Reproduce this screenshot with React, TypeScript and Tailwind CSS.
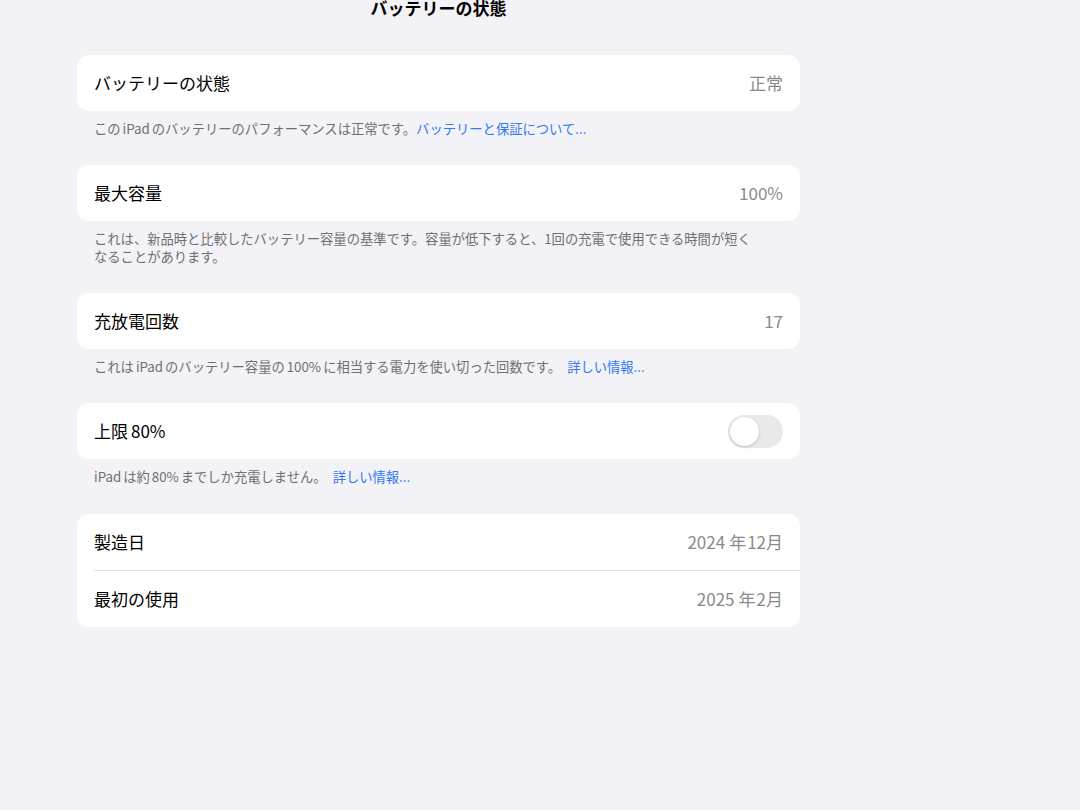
import { ReactNode } from 'react'

const font = { fontFamily: '"Noto Sans CJK JP", "Noto Sans", sans-serif' }

function Row({ label, value, children }: { label: ReactNode; value?: ReactNode; children?: ReactNode }) {
  return (
    <div className="flex items-center justify-between h-[56px] px-[17px]">
      <span className="text-[17px] text-black">{label}</span>
      {value && <span className="text-[17px] text-[#8a8a8e]">{value}</span>}
      {children}
    </div>
  )
}

function Footer({ children }: { children: ReactNode }) {
  return (
    <div className="px-[17px] pt-[9px] pb-[27px] text-[13.3px] leading-[18px] text-[#6f6f74] whitespace-nowrap">
      {children}
    </div>
  )
}

// iOS puts a little air around latin words in Japanese text
function L({ children }: { children: ReactNode }) {
  return <span className="mx-[2px]">{children}</span>
}

function Link({ children }: { children: ReactNode }) {
  return <span className="ml-[3px] text-[#3478f6]">{children}</span>
}

function Toggle() {
  return (
    <div className="w-[55px] h-[33px] rounded-full bg-[#e9e9eb] p-[2px] flex items-center">
      <div className="w-[29px] h-[29px] rounded-full bg-white shadow-[0_1px_3px_rgba(0,0,0,0.2)]" />
    </div>
  )
}

export default function App() {
  return (
    <div className="min-h-screen w-[1080px] h-[810px] bg-[#f2f2f7] overflow-hidden" style={font}>
      <div className="w-[723px] ml-[77px]">
        <div className="h-[55px] flex justify-center">
          <h1 className="mt-[-3px] text-[17px] leading-[22px] font-bold text-black">バッテリーの状態</h1>
        </div>

        <div className="bg-white rounded-[12px]">
          <Row label="バッテリーの状態" value="正常" />
        </div>
        <Footer>
          この<L>iPad</L>のバッテリーのパフォーマンスは正常です。<span className="text-[#3478f6]">バッテリーと保証について...</span>
        </Footer>

        <div className="bg-white rounded-[12px]">
          <Row label="最大容量" value="100%" />
        </div>
        <Footer>
          これは、新品時と比較したバッテリー容量の基準です。容量が低下すると、1回の充電で使用できる時間が短く
          <br />
          なることがあります。
        </Footer>

        <div className="bg-white rounded-[12px]">
          <Row label="充放電回数" value="17" />
        </div>
        <Footer>
          これは<L>iPad</L>のバッテリー容量の<L>100%</L>に相当する電力を使い切った回数です。 <Link>詳しい情報...</Link>
        </Footer>

        <div className="bg-white rounded-[12px]">
          <Row label={<>上限<span className="ml-[3px]">80%</span></>}>
            <Toggle />
          </Row>
        </div>
        <Footer>
          <span className="mr-[2px]">iPad</span>は約<L>80%</L>までしか充電しません。 <Link>詳しい情報...</Link>
        </Footer>

        <div className="bg-white rounded-[12px] mt-[1px]">
          <Row label="製造日" value={<>2024<span className="ml-[4px] mr-[1px]">年</span>12月</>} />
          <div className="ml-[17px] h-px bg-[#e0e0e3]" />
          <Row label="最初の使用" value={<>2025<span className="ml-[4px] mr-[1px]">年</span>2月</>} />
        </div>
      </div>
    </div>
  )
}
